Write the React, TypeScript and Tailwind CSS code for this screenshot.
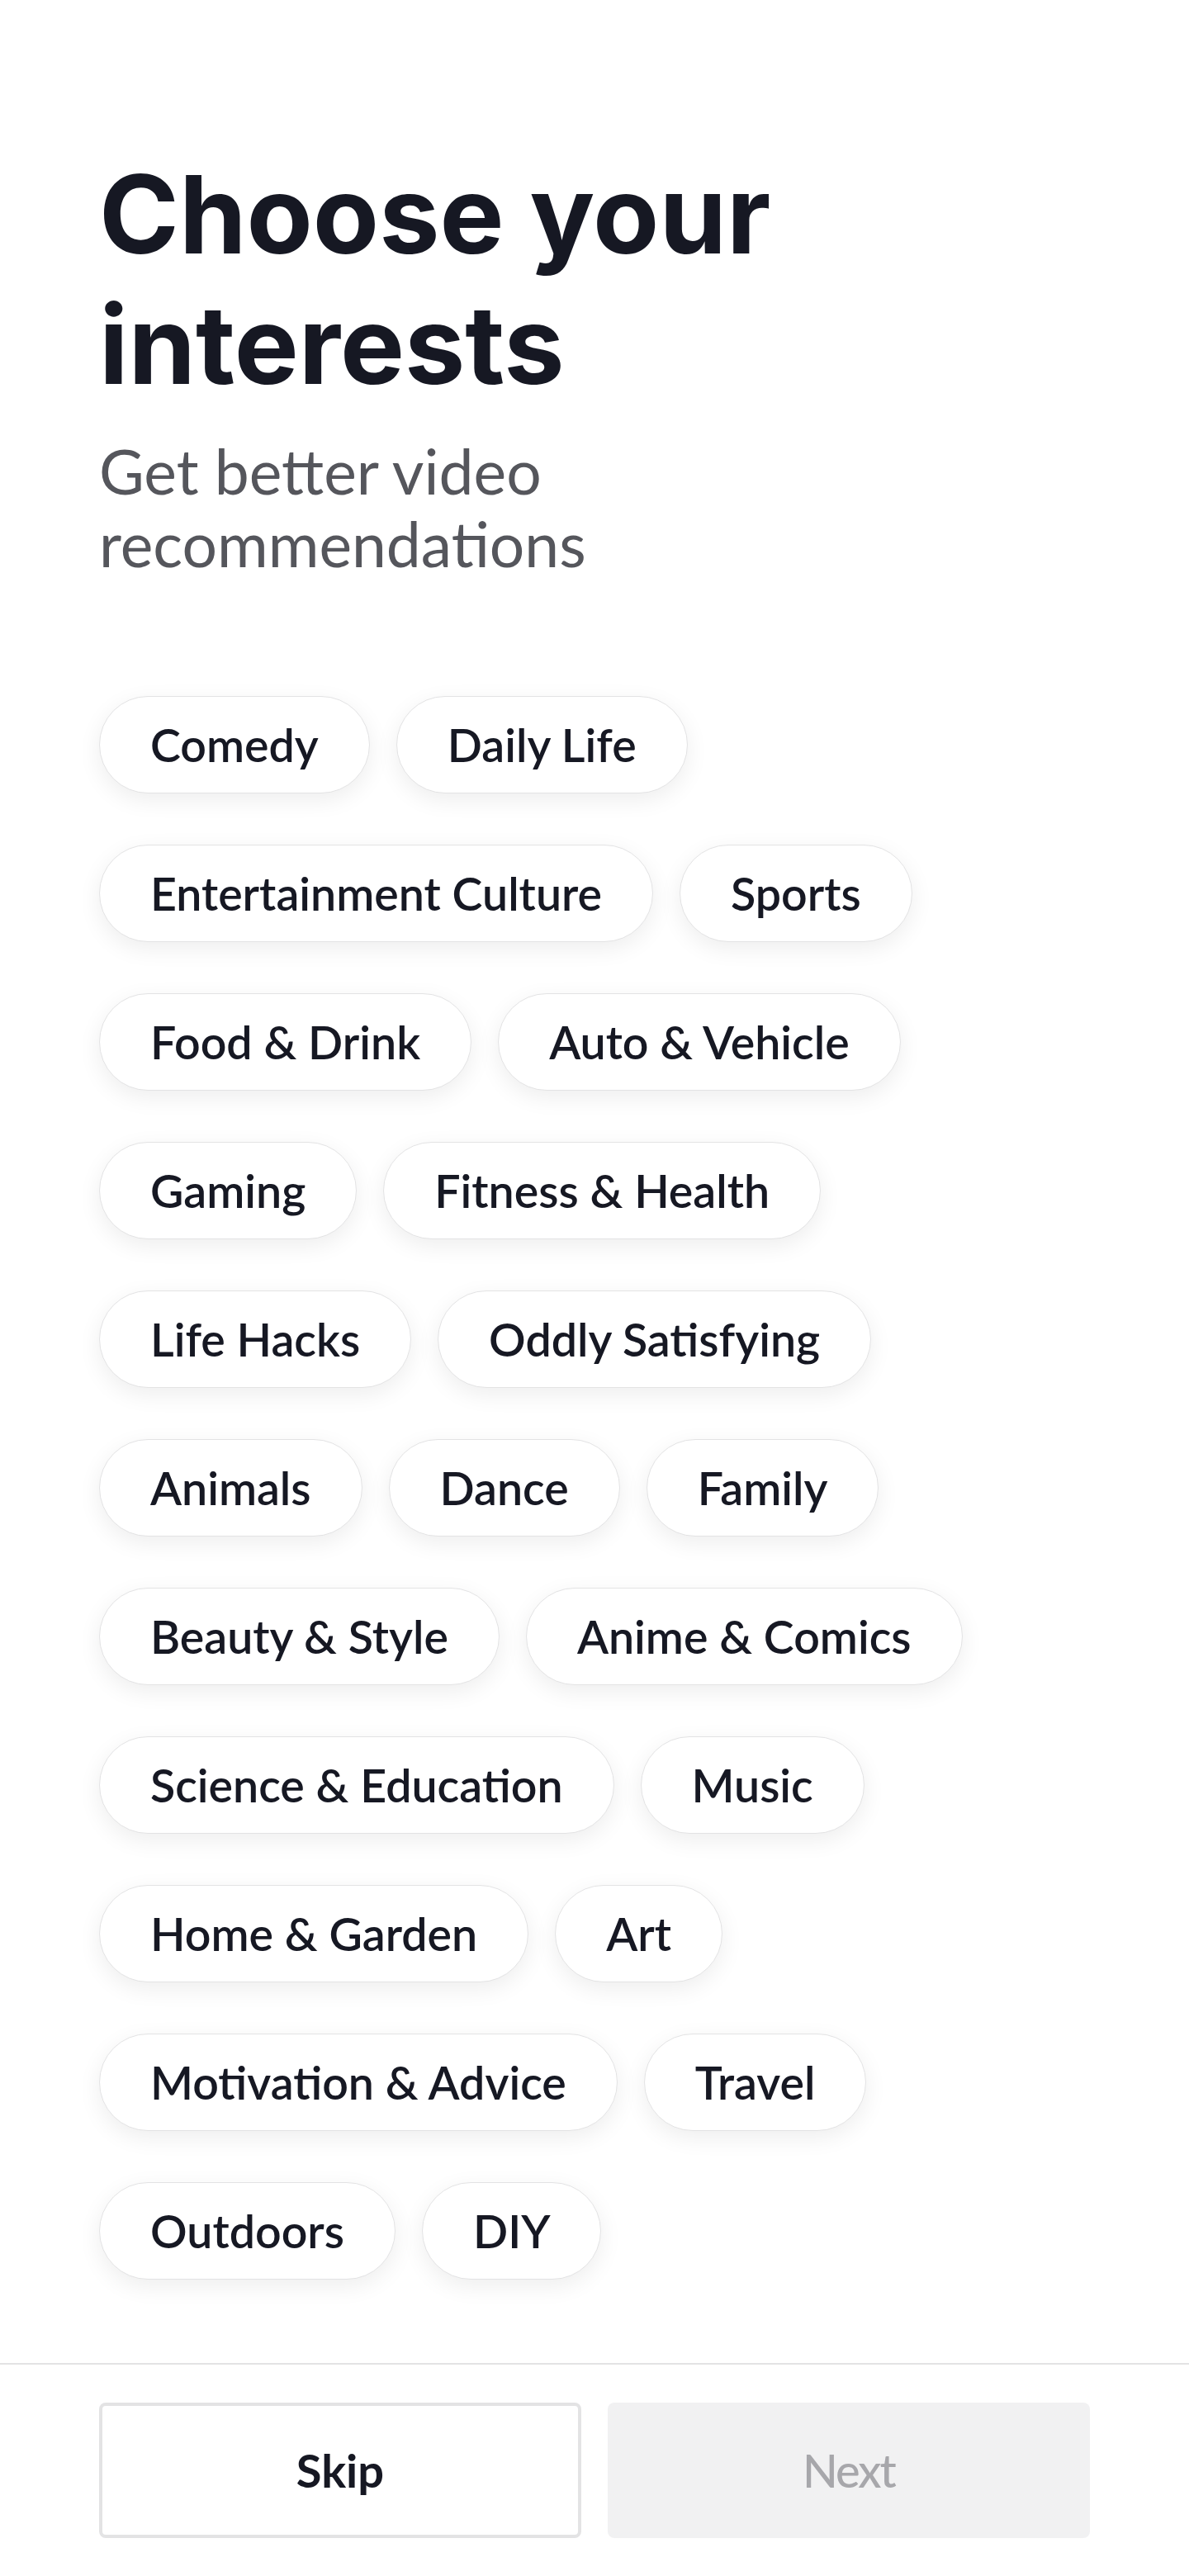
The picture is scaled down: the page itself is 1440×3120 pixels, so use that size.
import { useState } from "react";

// Onboarding step: pick topics to tune the feed. Nothing is selected yet,
// so "Next" stays disabled.

const topics = [
  "Comedy",
  "Daily Life",
  "Entertainment Culture",
  "Sports",
  "Food & Drink",
  "Auto & Vehicle",
  "Gaming",
  "Fitness & Health",
  "Life Hacks",
  "Oddly Satisfying",
  "Animals",
  "Dance",
  "Family",
  "Beauty & Style",
  "Anime & Comics",
  "Science & Education",
  "Music",
  "Home & Garden",
  "Art",
  "Motivation & Advice",
  "Travel",
  "Outdoors",
  "DIY",
];

const heading = { fontFamily: "Inter, 'Liberation Sans', sans-serif" };
const body = { fontFamily: "Lato, 'Liberation Sans', sans-serif" };

export default function App() {
  const [picked, setPicked] = useState<string[]>([]);
  const toggle = (t: string) =>
    setPicked((p) => (p.includes(t) ? p.filter((x) => x !== t) : [...p, t]));

  return (
    <div className="flex min-h-screen flex-col bg-white text-[#161823]">
      <main className="flex-1 px-[120px] pt-[181px]">
        <h1 className="text-[131px] font-bold leading-[158px]" style={heading}>
          Choose your
          <br />
          interests
        </h1>
        <p className="mt-[29px] text-[75px] leading-[88px] text-[#55565c]" style={body}>
          Get better video
          <br />
          recommendations
        </p>
        <div className="mt-[141px] flex flex-wrap gap-x-[32px] gap-y-[62px]" style={body}>
          {topics.map((t) => {
            const on = picked.includes(t);
            return (
              <button
                key={t}
                onClick={() => toggle(t)}
                className={
                  "flex h-[118px] items-center rounded-full border px-[61px] text-[55.5px] font-semibold whitespace-nowrap shadow-[0_8px_28px_rgba(0,0,0,0.07)] " +
                  (on
                    ? "border-[#fe2c55] bg-[#fff0f3] text-[#fe2c55]"
                    : "border-[#e3e3e4] bg-white text-[#161823]")
                }
              >
                {t}
              </button>
            );
          })}
        </div>
      </main>
      <footer className="border-t-2 border-[#e3e3e4] px-[120px] py-[46px]" style={body}>
        <div className="grid grid-cols-2 gap-[32px]">
          <button className="flex h-[164px] items-center justify-center rounded-lg border-4 border-[#e3e3e4] bg-white text-[56px] font-bold text-[#161823]">
            Skip
          </button>
          <button
            disabled={picked.length === 0}
            className="flex h-[164px] items-center justify-center rounded-lg bg-[#f1f1f2] text-[56px] font-medium tracking-[-2px] text-[#a7a7ab] enabled:bg-[#fe2c55] enabled:text-white"
          >
            Next
          </button>
        </div>
      </footer>
    </div>
  );
}
